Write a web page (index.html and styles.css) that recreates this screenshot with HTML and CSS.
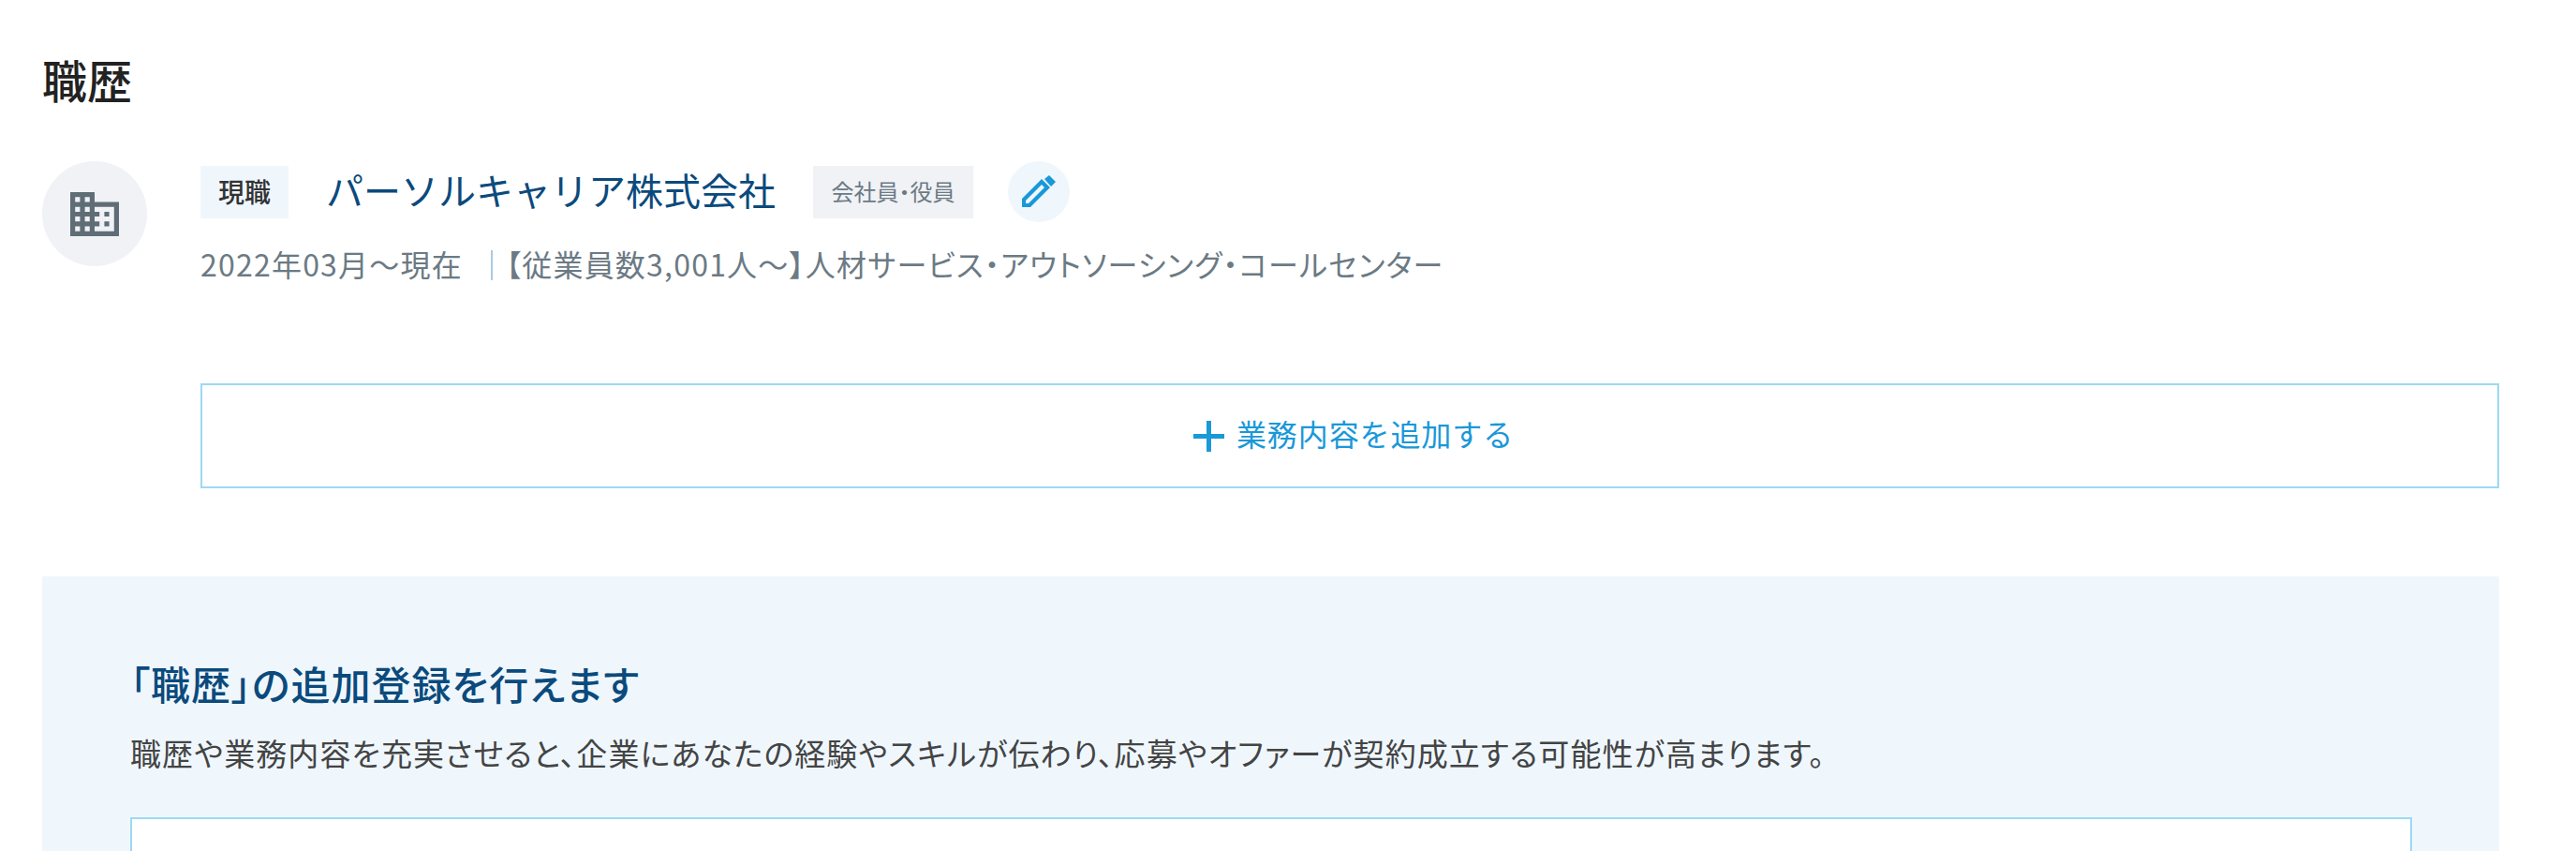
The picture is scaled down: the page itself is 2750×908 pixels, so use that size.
FILE: index.html
```html
<!DOCTYPE html>
<html lang="ja">
<head>
	<meta charset="utf-8">
	<title>職歴</title>
	<link rel="stylesheet" href="styles.css">
</head>
<body>
	<section class="career">
		<h2 class="career-title">職歴</h2>

		<div class="job">
			<div class="job-icon">
				<svg class="building" viewBox="0 0 20 18"><path d="M10 4V0H0v18h20V4H10zM4 16H2v-2h2v2zm0-4H2v-2h2v2zm0-4H2V6h2v2zm0-4H2V2h2v2zm4 12H6v-2h2v2zm0-4H6v-2h2v2zm0-4H6V6h2v2zm0-4H6V2h2v2zm10 12h-8v-2h2v-2h-2v-2h2V8h-2V6h8v10zm-2-8h-2v2h2V8zm0 4h-2v2h2v-2z"/></svg>
			</div>
			<div class="job-body">
				<div class="job-head">
					<span class="badge">現職</span>
					<span class="company">パーソルキャリア株式会社</span>
					<span class="tag">会社員・役員</span>
					<span class="edit">
						<svg class="pencil" viewBox="0 0 36 35"><path fill-rule="evenodd" d="M0 25 21 4l9 9-21 21H0zM4 27 21 10l3 3L7 30H4zM24 4l5-4 7 7-5 5z"/></svg>
					</span>
				</div>
				<p class="job-meta">2022年03月～現在<span class="sep"></span>【従業員数3,001人～】人材サービス・アウトソーシング・コールセンター</p>
			</div>
		</div>

		<div class="add-row">
			<div class="add-button">
				<svg class="plus" viewBox="0 0 32 32"><path d="M13.6 0h4.8v13.6H32v4.8H18.400V32h-4.800V18.400H0v-4.800h13.600z"/></svg>
				<span class="add-label">業務内容を追加する</span>
			</div>
		</div>

		<div class="notice">
			<h3 class="notice-title">「職歴」の追加登録を行えます</h3>
			<p class="notice-text">職歴や業務内容を充実させると、企業にあなたの経験やスキルが伝わり、応募やオファーが契約成立する可能性が高まります。</p>
			<div class="notice-box"></div>
		</div>
	</section>
</body>
</html>
```
FILE: styles.css
```css
:root {
	--navy: #0b4a7c;
	--blue: #1a98d8;
	--line: #9dd9f3;
	--pale: #eff7fd;
	--gray: #f0f2f6;
	--text: #6b7a84;
}

html, body {
	margin: 0;
	background: #fff;
}

body {
	font-family: "Noto Sans CJK JP", "Liberation Sans", sans-serif;
	font-feature-settings: "palt";
}

.career {
	margin: 0 82px 0 45px;
	padding-top: 56px;
}

.career-title {
	margin: 0;
	font-size: 48px;
	line-height: 56px;
	font-weight: 500;
	color: #222;
}

.job {
	display: flex;
	gap: 57px;
	margin-top: 60px;
}

.job-icon {
	display: flex;
	align-items: center;
	justify-content: center;
	flex: none;
	width: 112px;
	height: 112px;
	border-radius: 50%;
	background: var(--gray);
}

.building {
	width: 52px;
	height: 47px;
	margin-top: 1px;
	fill: #5f6e76;
}

.job-head {
	display: flex;
	align-items: center;
	height: 65px;
}

.badge {
	display: flex;
	align-items: center;
	justify-content: center;
	box-sizing: border-box;
	width: 94px;
	height: 56px;
	padding-bottom: 2px;
	background: var(--pale);
	font-size: 28px;
	font-weight: 500;
	color: #333;
}

.company {
	margin-left: 40px;
	padding-bottom: 6px;
	font-size: 40px;
	font-feature-settings: normal;
	color: var(--navy);
}

.tag {
	display: flex;
	align-items: center;
	justify-content: center;
	box-sizing: border-box;
	width: 171px;
	height: 56px;
	margin-left: 40px;
	padding-bottom: 2px;
	background: var(--gray);
	font-size: 24px;
	color: var(--text);
}

.edit {
	display: flex;
	align-items: center;
	justify-content: center;
	width: 66px;
	height: 65px;
	margin-left: 37px;
	border-radius: 50%;
	background: var(--pale);
}

.pencil {
	width: 36px;
	height: 35px;
	fill: var(--blue);
}

.job-meta {
	margin: 22px 0 0;
	font-size: 32px;
	line-height: 44px;
	letter-spacing: 1.22px;
	color: var(--text);
}

.sep {
	display: inline-block;
	width: 2px;
	height: 32px;
	margin: 0 14px 0 30px;
	background: #a9cbe0;
	vertical-align: -4px;
}

.add-row {
	margin-left: 169px;
	padding-top: 106px;
}

.add-button {
	display: flex;
	align-items: center;
	justify-content: center;
	gap: 13px;
	box-sizing: border-box;
	height: 112px;
	padding-left: 8px;
	border: 2px solid var(--line);
	font-size: 32px;
	font-feature-settings: normal;
	letter-spacing: 0.9px;
	color: var(--blue);
}

.add-label {
	margin-top: -6px;
}

.plus {
	width: 33px;
	height: 33px;
	fill: var(--blue);
}

.notice {
	box-sizing: border-box;
	margin-top: 94px;
	padding: 86px 93px 0 94px;
	height: 294px;
	background: var(--pale);
}

.notice-title {
	margin: 0;
	font-size: 42px;
	line-height: 56px;
	letter-spacing: 1px;
	font-weight: 500;
	color: var(--navy);
}

.notice-text {
	margin: 22px 0 0;
	font-size: 33px;
	line-height: 48px;
	letter-spacing: 1.06px;
	color: #444;
}

.notice-box {
	box-sizing: border-box;
	height: 37px;
	margin-top: 45px;
	border: 2px solid var(--line);
	border-bottom: none;
	background: #fff;
}
```
